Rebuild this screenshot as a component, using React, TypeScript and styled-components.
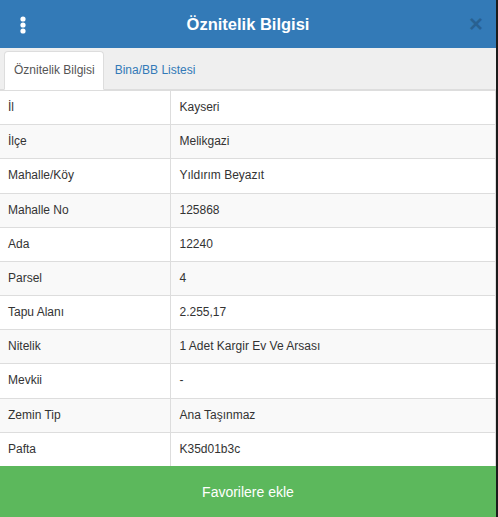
import styled, { createGlobalStyle } from "styled-components";

const GlobalStyle = createGlobalStyle`
  html, body {
    margin: 0;
    padding: 0;
    background: #1b1b1b;
  }
  body {
    font-family: "Liberation Sans", Arial, sans-serif;
    font-size: 12px;
    color: #333;
  }
  * {
    box-sizing: border-box;
  }
`;

const rows: [string, string][] = [
  ["İl", "Kayseri"],
  ["İlçe", "Melikgazi"],
  ["Mahalle/Köy", "Yıldırım Beyazıt"],
  ["Mahalle No", "125868"],
  ["Ada", "12240"],
  ["Parsel", "4"],
  ["Tapu Alanı", "2.255,17"],
  ["Nitelik", "1 Adet Kargir Ev Ve Arsası"],
  ["Mevkii", "-"],
  ["Zemin Tip", "Ana Taşınmaz"],
  ["Pafta", "K35d01b3c"],
];

const App = () => {
  return (
    <Wrapper>
      <GlobalStyle />
      <Header>
        <MenuButton aria-label="menu">
          <svg width="6" height="18" viewBox="0 0 6 18">
            <circle cx="3" cy="3" r="2.6" fill="#fff" />
            <circle cx="3" cy="9" r="2.6" fill="#fff" />
            <circle cx="3" cy="15" r="2.6" fill="#fff" />
          </svg>
        </MenuButton>
        <Title>Öznitelik Bilgisi</Title>
        <CloseButton aria-label="close">×</CloseButton>
      </Header>
      <TabBar>
        <Tab $active>Öznitelik Bilgisi</Tab>
        <Tab>Bina/BB Listesi</Tab>
      </TabBar>
      <Table>
        <tbody>
          {rows.map(([label, value], i) => (
            <Row key={label} $striped={i % 2 === 1}>
              <Cell>{label}</Cell>
              <Cell>{value}</Cell>
            </Row>
          ))}
        </tbody>
      </Table>
      <FavButton>Favorilere ekle</FavButton>
    </Wrapper>
  );
};

const Wrapper = styled.div`
  width: 496px;
  height: 517px;
  background: #fff;
  display: flex;
  flex-direction: column;
  overflow: hidden;
`;

const Header = styled.div`
  height: 48px;
  background: #337ab7;
  display: grid;
  grid-template-columns: 1fr auto 1fr;
  align-items: center;
  padding: 0 11px;
`;

const MenuButton = styled.button`
  border: none;
  background: transparent;
  padding: 0;
  width: 10px;
  display: flex;
  justify-content: center;
  margin: 2px 0 0 7px;
  justify-self: start;
`;

const Title = styled.h4`
  margin: 0;
  color: #fff;
  font-size: 16.5px;
  font-weight: 700;
  line-height: 1;
  margin-top: 1px;
`;

const CloseButton = styled.button`
  justify-self: end;
  border: none;
  background: transparent;
  padding: 0 2px;
  font-family: "Liberation Sans", Arial, sans-serif;
  font-size: 24px;
  font-weight: 700;
  line-height: 1;
  color: #000;
  opacity: 0.2;
`;

const TabBar = styled.div`
  background: #efefef;
  display: flex;
  padding: 3px 4px 0;
  border-bottom: 1px solid #ddd;
`;

const Tab = styled.div<{ $active?: boolean }>`
  padding: 10px 8px 10px 9px;
  line-height: 17px;
  margin-right: 1px;
  margin-bottom: -1px;
  border: 1px solid ${(p) => (p.$active ? "#ddd" : "transparent")};
  border-bottom-color: ${(p) => (p.$active ? "#fff" : "transparent")};
  border-radius: 4px 4px 0 0;
  background: ${(p) => (p.$active ? "#fff" : "transparent")};
  color: ${(p) => (p.$active ? "#555" : "#337ab7")};
`;

const Table = styled.table`
  width: 100%;
  border-collapse: collapse;
  flex: 1;
  border-right: 1px solid #ddd;
`;

const Row = styled.tr<{ $striped: boolean }>`
  background: ${(p) => (p.$striped ? "#f9f9f9" : "#fff")};
`;

const Cell = styled.td`
  padding: 8px 8px 8px 9px;
  line-height: 17px;
  border-top: 1px solid #ddd;
  vertical-align: middle;

  &:first-child {
    width: 170px;
    padding-left: 8px;
    border-right: 1px solid #ddd;
  }
`;

const FavButton = styled.button`
  height: 51px;
  flex-shrink: 0;
  border: none;
  background: #5cb85c;
  color: #fff;
  font-family: "Liberation Sans", Arial, sans-serif;
  font-size: 14px;
  width: 100%;
`;

export default App;
